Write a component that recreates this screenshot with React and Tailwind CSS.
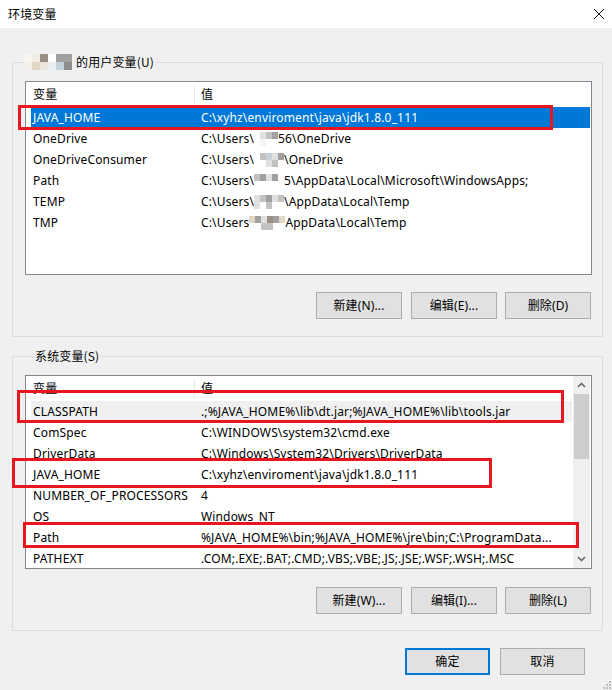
import React from "react";

const G1 = "#c2c2c2", G2 = "#a0a0a0", G3 = "#e0e0e0", B1 = "#c5d3dc", BE = "#e2d6c4", BR = "#9a8f84";

function Mosaic({ cols, w = 6, h = 7 }) {
  return (
    <span className="inline-flex align-middle">
      {cols.map((c, i) => (
        <span key={i} className="flex flex-col">
          {c.map((col, j) => (
            <span key={j} className="block" style={{ width: w, height: h, background: col }} />
          ))}
        </span>
      ))}
    </span>
  );
}

const userRows = [
  { n: "JAVA_HOME", v: "C:\\xyhz\\enviroment\\java\\jdk1.8.0_111", sel: true },
  { n: "OneDrive", v: <>C:\Users\<Mosaic cols={[["#fff", "#fff"], [G3, "#f4f4f4"], [G1, "#fff"], [G2, "#fff"]]} />56\OneDrive</> },
  { n: "OneDriveConsumer", v: <>C:\Users\<Mosaic cols={[["#fff", "#fff"], [G1, "#fff"], [B1, G3], [G3, G1], [G2, "#fff"]]} />\OneDrive</> },
  { n: "Path", v: <>C:\Users\<Mosaic cols={[[G1, "#fff"], [G2, "#fff"], [G3, "#fff"], [G2, "#fff"], ["#fff", "#fff"]]} />5\AppData\Local\Microsoft\WindowsApps;</> },
  { n: "TEMP", v: <>C:\Users\<Mosaic cols={[[G3, G3], [G1, "#fff"], [G2, G1], [G3, "#fff"], [G1, "#fff"]]} />\AppData\Local\Temp</> },
  { n: "TMP", v: <>C:\Users<Mosaic cols={[[BE, "#fff"], [G2, "#fff"], [G3, G1], [BR, G1], [G2, "#fff"], [BE, "#fff"]]} />AppData\Local\Temp</> },
];

const sysRows = [
  { n: "CLASSPATH", v: ".;%JAVA_HOME%\\lib\\dt.jar;%JAVA_HOME%\\lib\\tools.jar", grey: true },
  { n: "ComSpec", v: "C:\\WINDOWS\\system32\\cmd.exe" },
  { n: "DriverData", v: "C:\\Windows\\System32\\Drivers\\DriverData" },
  { n: "JAVA_HOME", v: "C:\\xyhz\\enviroment\\java\\jdk1.8.0_111" },
  { n: "NUMBER_OF_PROCESSORS", v: "4" },
  { n: "OS", v: "Windows_NT" },
  { n: "Path", v: "%JAVA_HOME%\\bin;%JAVA_HOME%\\jre\\bin;C:\\ProgramData..." },
  { n: "PATHEXT", v: ".COM;.EXE;.BAT;.CMD;.VBS;.VBE;.JS;.JSE;.WSF;.WSH;.MSC" },
];

function Header() {
  return (
    <div className="flex h-[25px] items-center ml-[5px] shrink-0">
      <div className="w-[163px] pl-[2px]">变量</div>
      <div className="w-px h-[17px] bg-[#e5e5e5]" />
      <div className="pl-[6px]">值</div>
    </div>
  );
}

function Row({ r }) {
  return (
    <div
      className={
        "flex h-[21px] items-center ml-[5px] mr-[1px] shrink-0 whitespace-nowrap " +
        (r.sel ? "bg-[#0078d7] text-white" : r.grey ? "bg-[#f0f0f0]" : "")
      }
    >
      <div className="w-[170px] pl-[2px] shrink-0 overflow-hidden">{r.n}</div>
      <div className="flex-1 overflow-hidden">{r.v}</div>
    </div>
  );
}

function Btn({ children, primary, w = "w-[86px]" }) {
  return (
    <div
      className={
        w +
        " h-[27px] flex items-center justify-center bg-[#e1e1e1] " +
        (primary ? "border-2 border-[#0078d7]" : "border border-[#adadad]")
      }
    >
      {children}
    </div>
  );
}

function Chevron({ up }) {
  return (
    <svg width="9" height="6" viewBox="0 0 9 6">
      <path d={up ? "M1 5 L4.5 1.5 L8 5" : "M1 1 L4.5 4.5 L8 1"} fill="none" stroke="#606060" strokeWidth="1.5" />
    </svg>
  );
}

function RedBox({ cls }) {
  return <div className={"absolute border-[3px] border-[#e8161f] pointer-events-none " + cls} />;
}

export default function App() {
  return (
    <div className="relative w-[612px] h-[690px] bg-[#f0f0f0] overflow-hidden text-[12px] text-black font-['Noto_Sans','Noto_Sans_CJK_SC',sans-serif] leading-[16px] tracking-[0.15px]">
      {/* title bar */}
      <div className="h-[28px] bg-white flex items-center justify-between pl-[8px] pr-[6px]">
        <div className="font-['Noto_Sans_CJK_SC',sans-serif]">环境变量</div>
        <svg width="12" height="12" viewBox="0 0 12 12" className="mr-[1px]">
          <path d="M1 1 L11 11 M11 1 L1 11" stroke="#111" strokeWidth="1" />
        </svg>
      </div>

      {/* user vars */}
      <fieldset className="ml-[12px] mt-[26px] w-[591px] border border-[#dcdcdc] pt-[11px] pl-[12px] pr-[10px] pb-[17px]">
        <legend className="ml-[-1px] pr-[2px] flex items-center h-[16px]">
          <Mosaic w={8} h={8} cols={[[ "#f7f4ef", "#f3efe9"], ["#f0ebe3", BE], [BR, "#ece6dd"], ["#fff", "#e9eef2"], [G2, B1], [G2, "#8c8c8c"]]} />
          <span className="ml-[4px] font-['Noto_Sans_CJK_SC',sans-serif]">的用户变量(U)</span>
        </legend>
        <div className="w-[567px] h-[194px] border border-[#828790] bg-white flex flex-col overflow-hidden">
          <Header />
          {userRows.map((r, i) => (
            <Row key={i} r={r} />
          ))}
        </div>
        <div className="flex justify-end mt-[17px] mr-[1px]">
          <Btn>新建(N)...</Btn>
          <div className="ml-[9px]"><Btn>编辑(E)...</Btn></div>
          <div className="ml-[8px]"><Btn>删除(D)</Btn></div>
        </div>
      </fieldset>

      {/* system vars */}
      <fieldset className="ml-[12px] mt-[11px] w-[591px] border border-[#dcdcdc] pt-[11px] pl-[12px] pr-[10px] pb-[16px]">
        <legend className="ml-[9px] px-[1px] h-[16px] font-['Noto_Sans_CJK_SC',sans-serif]">系统变量(S)</legend>
        <div className="w-[567px] h-[194px] border border-[#828790] bg-white flex overflow-hidden">
          <div className="flex-1 flex flex-col overflow-hidden">
            <Header />
            {sysRows.map((r, i) => (
              <Row key={i} r={r} />
            ))}
          </div>
          <div className="w-[17px] mr-[1px] bg-[#f0f0f0] flex flex-col items-center shrink-0">
            <div className="h-[18px] flex items-center justify-center"><Chevron up /></div>
            <div className="w-[15px] h-[65px] bg-[#cdcdcd]" />
            <div className="flex-1" />
            <div className="h-[18px] flex items-center justify-center"><Chevron /></div>
          </div>
        </div>
        <div className="flex justify-end mt-[18px] mr-[1px]">
          <Btn>新建(W)...</Btn>
          <div className="ml-[9px]"><Btn>编辑(I)...</Btn></div>
          <div className="ml-[8px]"><Btn>删除(L)</Btn></div>
        </div>
      </fieldset>

      {/* bottom buttons */}
      <div className="flex justify-end mt-[17px] pr-[27px]">
        <Btn primary w="w-[85px]">确定</Btn>
        <div className="ml-[10px]"><Btn w="w-[85px]">取消</Btn></div>
      </div>

      {/* grip */}
      <div className="absolute right-[1px] bottom-[1px] grid grid-cols-3 gap-[1px]">
        {[0, 0, 1, 0, 1, 1, 1, 1, 1].map((v, i) => (
          <span key={i} className={"block w-[2px] h-[2px] " + (v ? "bg-[#bcbcbc]" : "")} />
        ))}
      </div>

      {/* red highlights */}
      <RedBox cls="left-[18px] top-[105px] w-[535px] h-[25px]" />
      <RedBox cls="left-[17px] top-[390px] w-[547px] h-[33px]" />
      <RedBox cls="left-[12px] top-[458px] w-[480px] h-[30px]" />
      <RedBox cls="left-[23px] top-[522px] w-[556px] h-[26px]" />
    </div>
  );
}
